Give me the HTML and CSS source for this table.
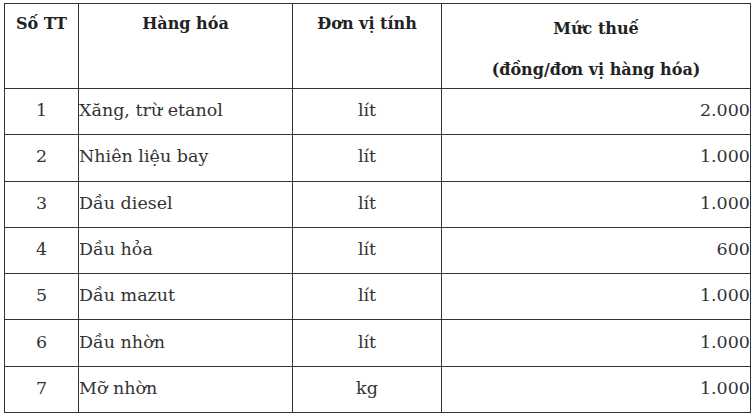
FILE: index.html
```html
<!DOCTYPE html>
<html lang="vi">
<head>
<meta charset="utf-8">
<link rel="stylesheet" href="styles.css">
</head>
<body>
<div class="wrap">
<table class="tax">
  <colgroup>
    <col class="c1"><col class="c2"><col class="c3"><col class="c4">
  </colgroup>
  <thead>
    <tr class="head">
      <th class="top">Số TT</th>
      <th class="top">Hàng hóa</th>
      <th class="top">Đơn vị tính</th>
      <th class="rate"><div class="l1">Mức thuế</div><div class="l2">(đồng/đơn vị hàng hóa)</div></th>
    </tr>
  </thead>
  <tbody>
    <tr><td class="no">1</td><td class="name">Xăng, trừ etanol</td><td class="unit">lít</td><td class="val">2.000</td></tr>
    <tr><td class="no">2</td><td class="name">Nhiên liệu bay</td><td class="unit">lít</td><td class="val">1.000</td></tr>
    <tr><td class="no">3</td><td class="name">Dầu diesel</td><td class="unit">lít</td><td class="val">1.000</td></tr>
    <tr><td class="no">4</td><td class="name">Dầu hỏa</td><td class="unit">lít</td><td class="val">600</td></tr>
    <tr><td class="no">5</td><td class="name">Dầu mazut</td><td class="unit">lít</td><td class="val">1.000</td></tr>
    <tr><td class="no">6</td><td class="name">Dầu nhờn</td><td class="unit">lít</td><td class="val">1.000</td></tr>
    <tr><td class="no">7</td><td class="name">Mỡ nhờn</td><td class="unit">kg</td><td class="val">1.000</td></tr>
  </tbody>
</table>
</div>
</body>
</html>
```
FILE: styles.css
```css
html, body {
  margin: 0;
  padding: 0;
  background: #fff;
}
.wrap {
  padding: 3px 0 0 4px;
}
.tax {
  border-collapse: collapse;
  table-layout: fixed;
  width: 746px;
  font-family: "DejaVu Serif", serif;
  color: #333;
}
.c1 { width: 74px; }
.c2 { width: 214px; }
.c3 { width: 149px; }
.c4 { width: 309px; }
.tax th, .tax td {
  border: 1px solid #333;
  padding: 0;
}
.tax tr.head {
  height: 85px;
}
.tax tbody tr {
  height: 46.3px;
}
.tax th {
  font-size: 16px;
  line-height: 19px;
  font-weight: bold;
  color: #222;
  vertical-align: top;
  text-align: center;
}
.tax th.top {
  padding-top: 10px;
}
.tax th.rate {
  padding-top: 15px;
}
.rate .l2 {
  margin-top: 22px;
}
.tax td {
  font-size: 17.5px;
  line-height: 21px;
  vertical-align: middle;
  padding-bottom: 2px;
}
.no, .unit { text-align: center; }
.name { text-align: left; padding-left: 1px; }
.val { text-align: right; }
```
